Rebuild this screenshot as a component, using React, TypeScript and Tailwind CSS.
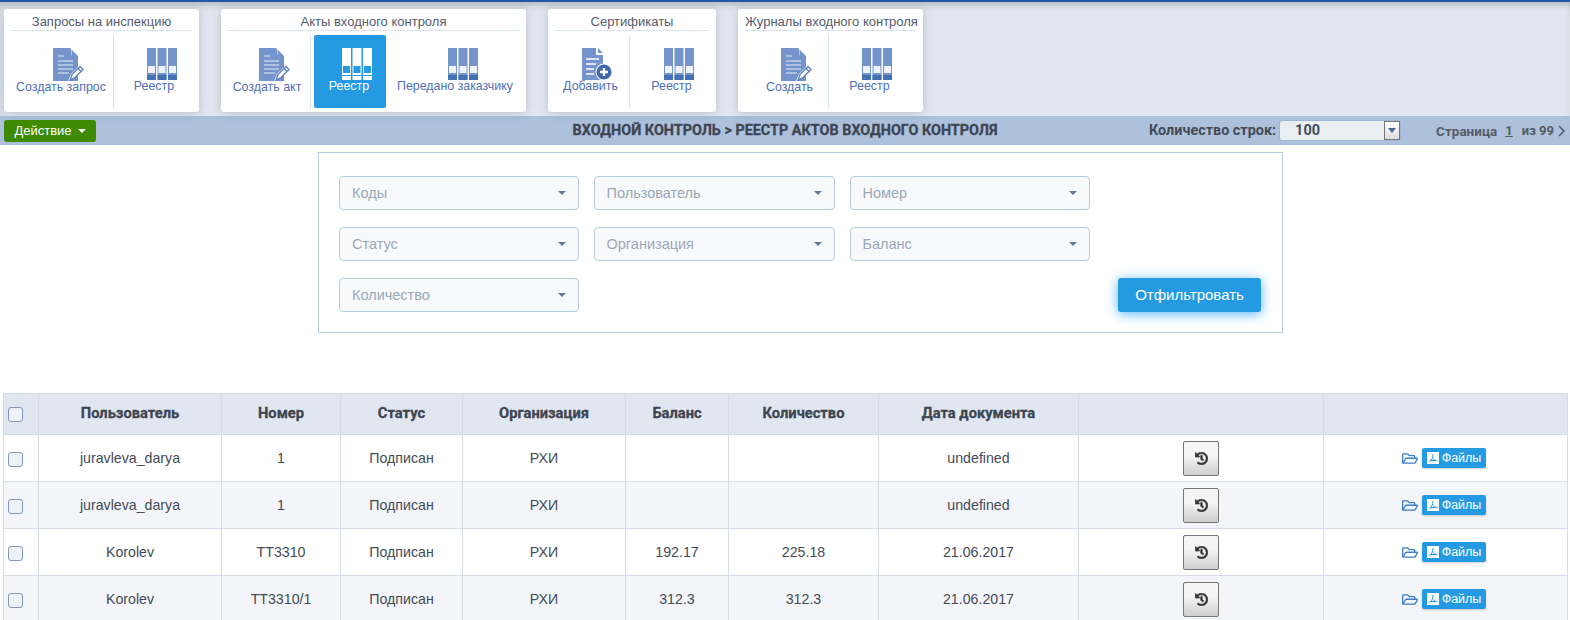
import { FaHistory, FaRegFolderOpen } from 'react-icons/fa';

const DocPenIcon = () => (
	<svg width="32" height="33" viewBox="0 0 32 33" className="block">
		<path d="M0 0H17L25 8V33H0Z" fill="#7494cb" />
		<path d="M18 0L25 7H18Z" fill="#fff" />
		<path d="M18.5 1.5L24 7H18.5Z" fill="#7494cb" />
		<path d="M5 8H11M5 13H20M5 17H20M5 21H20M5 25H16" stroke="#e6ecf6" strokeWidth="1.2" />
		<path d="M15 33L18 26L27 17L31 21L22 30Z" fill="#fff" />
		<path d="M17 32L19 26.5L27 18.5L30 21.5L22 29.5ZM25 20.5L28 23.5" fill="#fff" stroke="#5b7fbe" strokeWidth="1.3" />
	</svg>
);

const DocPlusIcon = () => (
	<svg width="32" height="32" viewBox="0 0 32 32" className="block">
		<path d="M0 0H14V7H21V32H0Z" fill="#7494cb" />
		<path d="M16 0L21 5H16Z" fill="#7494cb" />
		<path d="M4 11H17M4 16H14M4 21H12M4 26H12" stroke="#fff" strokeWidth="1.4" />
		<circle cx="22" cy="24" r="8.5" fill="#fff" />
		<circle cx="22" cy="24" r="7.5" fill="#3f67ae" />
		<path d="M22 20V28M18 24H26" stroke="#fff" strokeWidth="2.4" />
	</svg>
);

const BinderIcon = ({ active = false }: { active?: boolean }) => {
	const body = active ? '#ffffff' : '#7494cb';
	const box = active ? '#249ae2' : '#eef2f9';
	return (
		<svg width="30" height="32" viewBox="0 0 30 32" className="block">
			{[0, 10.5, 21].map((x) => (
				<g key={x}>
					<rect x={x} y="0" width="9" height="32" fill={body} />
					<rect x={x + 1} y="18" width="7" height="7" fill={box} />
					{active ? (
						<rect x={x} y="27" width="9" height="1" fill="#249ae2" />
					) : (
						<rect x={x} y="27" width="9" height="5" fill="#4470b6" />
					)}
				</g>
			))}
		</svg>
	);
};

type ToolItem = { label: string; icon: 'doc' | 'plus' | 'binder'; width: string; active?: boolean };

const ToolCard = ({ title, width, items }: { title: string; width: string; items: ToolItem[] }) => (
	<div className={`${width} flex h-[103px] shrink-0 flex-col rounded-[3px] bg-white px-[7px] shadow-[0_1px_10px_rgba(90,100,120,0.3)]`}>
		<div className="mt-[6px] h-[16px] border-b border-[#d8e2f0] text-center text-[13px] leading-[13px] whitespace-nowrap text-[#555b6e]">
			{title}
		</div>
		<div className="mt-[4px] flex h-[73px]">
			{items.map((item, i) => (
				<div
					key={item.label}
					className={`${item.width} flex flex-col items-center pt-[13px] ${i < items.length - 1 ? 'border-r border-[#d8e2f0]' : ''} ${item.active ? 'rounded-[2px] border-none bg-[#249ae2] text-white' : 'text-[#4f6fb8]'}`}
				>
					<div className="ml-[15px]">
						{item.icon === 'doc' && <DocPenIcon />}
						{item.icon === 'plus' && <DocPlusIcon />}
						{item.icon === 'binder' && <BinderIcon active={item.active} />}
					</div>
					<span className="mt-[-1px] text-[12.4px] leading-[14px] whitespace-nowrap">{item.label}</span>
				</div>
			))}
		</div>
	</div>
);

const FilterSelect = ({ label }: { label: string }) => (
	<div className="flex h-[34px] items-center justify-between rounded-[4px] border border-[#b5cce0] bg-[#f7f9fb] pr-[12px] pl-[12px] text-[14.5px] text-[#9aa8b8]">
		<span className="pt-[1px]">{label}</span>
		<span className="h-0 w-0 border-x-[4px] border-t-[4px] border-x-transparent border-t-[#5d7a99]" />
	</div>
);

const rows = [
	{ user: 'juravleva_darya', num: '1', balance: '', qty: '', date: 'undefined' },
	{ user: 'juravleva_darya', num: '1', balance: '', qty: '', date: 'undefined' },
	{ user: 'Korolev', num: 'TT3310', balance: '192.17', qty: '225.18', date: '21.06.2017' },
	{ user: 'Korolev', num: 'TT3310/1', balance: '312.3', qty: '312.3', date: '21.06.2017' },
];

const headers = ['Пользователь', 'Номер', 'Статус', 'Организация', 'Баланс', 'Количество', 'Дата документа', '', ''];

const Checkbox = () => (
	<span className="ml-[4px] block h-[15px] w-[15px] rounded-[3px] border border-[#7f97b8] bg-[#eef2f6]" />
);

const cellClass = 'border border-[#d5dce8] p-0 text-center';
const textCell = `${cellClass} pt-[2px]`;

export default function App() {
	return (
		<div className="h-[620px] w-[1570px] overflow-hidden bg-white font-['Liberation_Sans',sans-serif]">
			<div className="h-[2px] bg-[#1f5aa5]" />
			<div className="flex h-[114px] gap-[22px] bg-[#e1e7f0] pt-[7px] pl-[4px] shadow-[inset_0_6px_8px_-4px_rgba(0,0,0,0.25)]">
				<ToolCard
					title="Запросы на инспекцию"
					width="w-[195px]"
					items={[
						{ label: 'Создать запрос', icon: 'doc', width: 'w-[103px] pr-[2px]' },
						{ label: 'Реестр', icon: 'binder', width: 'w-[78px] pl-[2px]' },
					]}
				/>
				<ToolCard
					title="Акты входного контроля"
					width="w-[305px]"
					items={[
						{ label: 'Создать акт', icon: 'doc', width: 'w-[83px] pr-[4px]' },
						{ label: 'Реестр', icon: 'binder', width: 'ml-[3px] w-[72px] pr-[2px]', active: true },
						{ label: 'Передано заказчику', icon: 'binder', width: 'ml-[3px] w-[130px] pl-[2px]' },
					]}
				/>
				<ToolCard
					title="Сертификаты"
					width="w-[168px]"
					items={[
						{ label: 'Добавить', icon: 'plus', width: 'w-[75px] pr-[3px]' },
						{ label: 'Реестр', icon: 'binder', width: 'w-[79px] pl-[4px]' },
					]}
				/>
				<ToolCard
					title="Журналы входного контроля"
					width="w-[185px]"
					items={[
						{ label: 'Создать', icon: 'doc', width: 'w-[84px] pl-[6px]' },
						{ label: 'Реестр', icon: 'binder', width: 'w-[87px] pr-[6px]' },
					]}
				/>
			</div>

			<div className="grid h-[29px] grid-cols-[1fr_auto_1fr] items-center bg-[#adc0dc]">
				<div className="pl-[4px]">
					<button className="flex h-[22px] w-[92px] items-center justify-center gap-[6px] rounded-[3px] bg-[#3e8a00] text-[13px] text-white">
						Действие
						<span className="h-0 w-0 border-x-[4px] border-t-[4px] border-x-transparent border-t-white" />
					</button>
				</div>
				<div className="pt-[1px] font-['Roboto',sans-serif] text-[14.4px] font-bold whitespace-nowrap text-[#3d4550] [-webkit-text-stroke:0.3px_#3d4550]">
					ВХОДНОЙ КОНТРОЛЬ &gt; РЕЕСТР АКТОВ ВХОДНОГО КОНТРОЛЯ
				</div>
				<div className="flex items-center justify-end pt-[1px] pr-[4px] font-['Roboto',sans-serif]">
					<span className="text-[14.4px] font-bold text-[#444b55]">Количество строк:</span>
					<div className="ml-[3px] flex h-[21px] w-[122px] items-center justify-between rounded-[3px] border border-[#9db4d3] bg-[#e9eef3] pl-[15px] text-[14.5px] font-bold text-[#444b55]">
						100
						<span className="flex h-[19px] w-[16px] items-center justify-center border border-[#777] bg-gradient-to-b from-white to-[#ddd]">
							<span className="h-0 w-0 border-x-[4px] border-t-[5px] border-x-transparent border-t-[#4c6a94]" />
						</span>
					</div>
					<span className="ml-[35px] text-[13.5px] font-bold text-[#555c66]">Страница</span>
					<span className="ml-[8px] text-[13px] font-bold text-[#555c66] underline">1</span>
					<span className="ml-[9px] text-[13px] font-bold text-[#555c66]">из 99</span>
					<svg width="9" height="12" viewBox="0 0 9 12" className="ml-[3px]">
						<path d="M2 1L7 6L2 11" fill="none" stroke="#555c66" strokeWidth="1.5" />
					</svg>
				</div>
			</div>

			<div className="mt-[7px] ml-[318px] flex h-[181px] w-[965px] justify-between border border-[#b5cce0] pt-[23px] pr-[21px] pb-[20px] pl-[20px]">
				<div className="grid grid-cols-[239.5px_241px_240px] grid-rows-[34px_34px_34px] gap-x-[15px] gap-y-[17px]">
					<FilterSelect label="Коды" />
					<FilterSelect label="Пользователь" />
					<FilterSelect label="Номер" />
					<FilterSelect label="Статус" />
					<FilterSelect label="Организация" />
					<FilterSelect label="Баланс" />
					<FilterSelect label="Количество" />
				</div>
				<button className="mt-auto h-[34px] w-[143px] rounded-[3px] bg-[#249ae2] text-[15px] text-white shadow-[0_2px_12px_rgba(60,170,250,0.85)]">
					Отфильтровать
				</button>
			</div>

			<table className="mt-[60px] ml-[3px] w-[1565px] table-fixed border-collapse text-[14.2px] text-[#444b55]">
				<colgroup>
					<col className="w-[35px]" />
					<col className="w-[183px]" />
					<col className="w-[119px]" />
					<col className="w-[122px]" />
					<col className="w-[163px]" />
					<col className="w-[103px]" />
					<col className="w-[150px]" />
					<col className="w-[200px]" />
					<col className="w-[245px]" />
					<col />
				</colgroup>
				<thead>
					<tr className="h-[41px] bg-[#e1e7f0]">
						<th className={cellClass}>
							<Checkbox />
						</th>
						{headers.map((h, i) => (
							<th key={i} className={`${cellClass} pb-[2px] font-['Roboto',sans-serif] text-[14.7px] font-bold text-[#3d4550] [-webkit-text-stroke:0.3px_#3d4550]`}>
								{h}
							</th>
						))}
					</tr>
				</thead>
				<tbody>
					{rows.map((r, i) => (
						<tr key={i} className={`h-[47px] ${i % 2 === 1 ? 'bg-[#f3f5fa]' : 'bg-white'}`}>
							<td className={textCell}>
								<Checkbox />
							</td>
							<td className={textCell}>{r.user}</td>
							<td className={textCell}>{r.num}</td>
							<td className={textCell}>Подписан</td>
							<td className={textCell}>РХИ</td>
							<td className={textCell}>{r.balance}</td>
							<td className={textCell}>{r.qty}</td>
							<td className={textCell}>{r.date}</td>
							<td className={cellClass}>
								<div className="flex justify-center">
									<button className="flex h-[35px] w-[36px] items-center justify-center rounded-[2px] border border-[#777] bg-gradient-to-b from-[#f5f5f5] from-40% to-[#cfcfcf] text-[#333]">
										<FaHistory className="h-[13px] w-[13px]" stroke="currentColor" strokeWidth={24} />
									</button>
								</div>
							</td>
							<td className={cellClass}>
								<div className="flex items-center justify-center gap-[4px] pr-[3px]">
									<FaRegFolderOpen className="h-[15px] w-[16px] text-[#3b7fc4]" />
									<span className="flex h-[20px] w-[64px] items-center justify-center gap-[3px] rounded-[2px] bg-[#249ae2] text-[12.5px] text-white shadow-[0_1px_2px_rgba(0,0,0,0.2)]">
										<svg width="12" height="12" viewBox="0 0 12 12">
											<rect width="12" height="12" fill="#fff" />
											<path d="M6 2C6 5 5 8 2.5 10M6 6.5C7 8 8.5 8.5 10.5 8.5M3 8.5H9" fill="none" stroke="#249ae2" strokeWidth="1" />
										</svg>
										Файлы
									</span>
								</div>
							</td>
						</tr>
					))}
				</tbody>
			</table>
		</div>
	);
}
